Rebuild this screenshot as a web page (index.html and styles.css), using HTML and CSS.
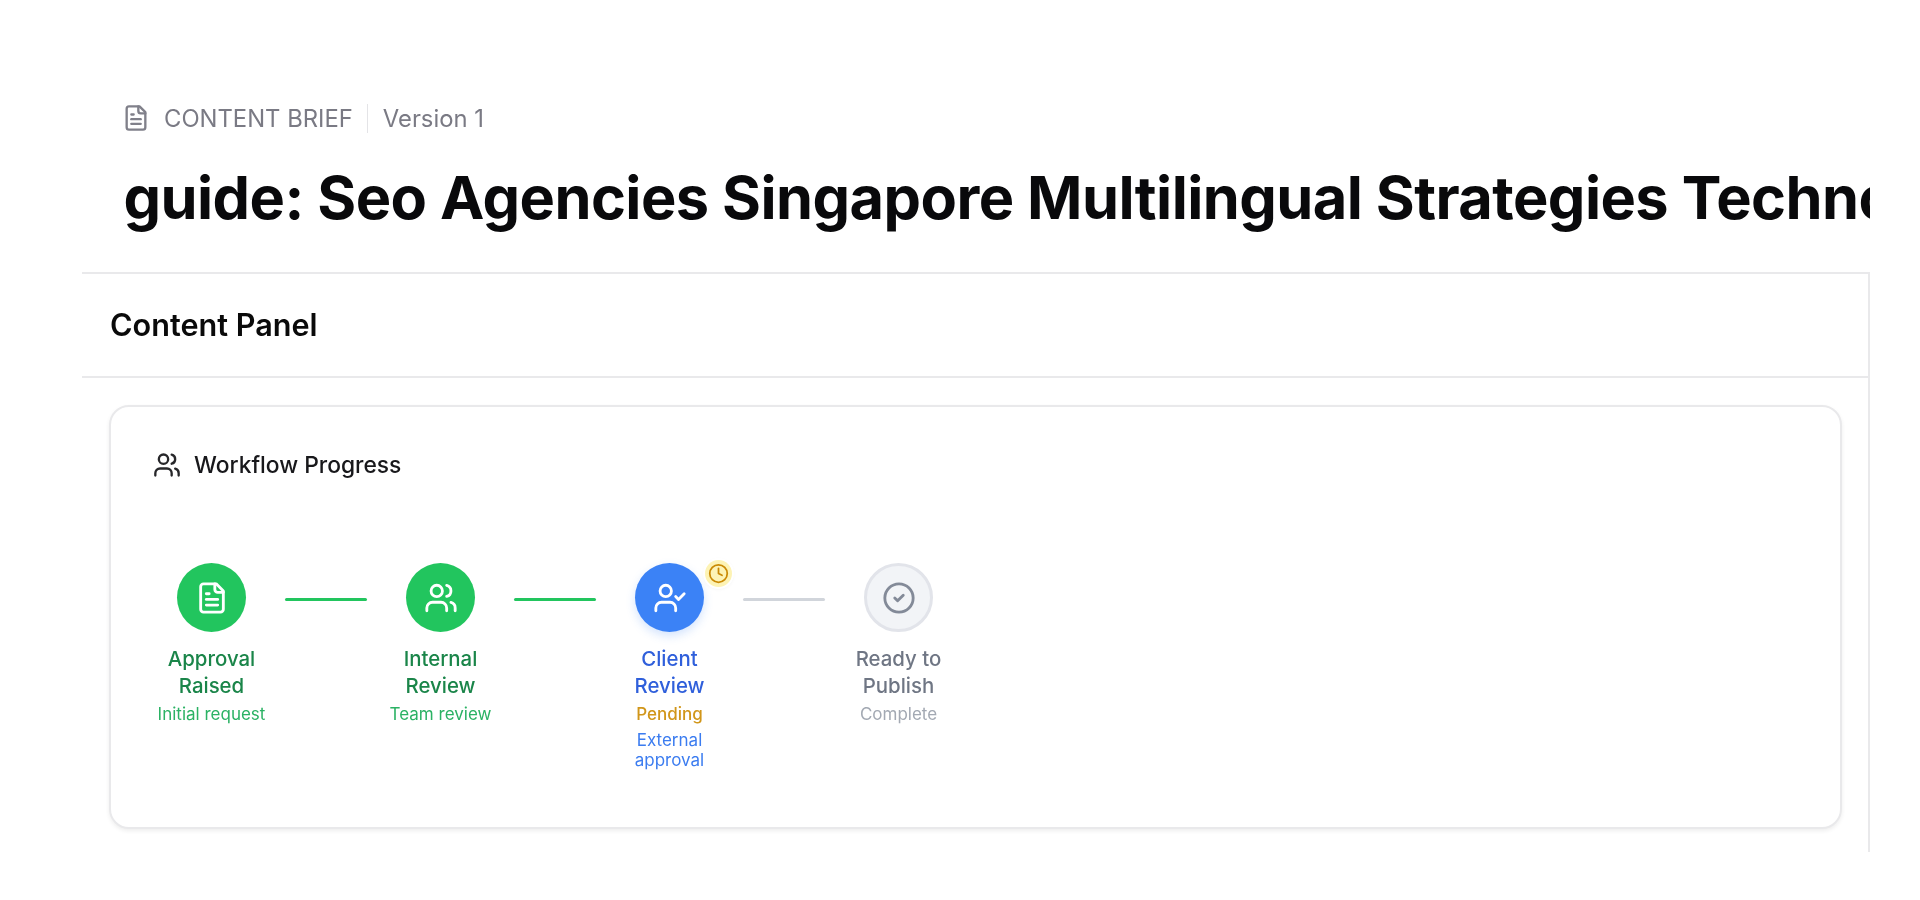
FILE: index.html
```html
<!DOCTYPE html>
<html lang="en">
<head>
<meta charset="utf-8">
<title>Content Brief</title>
<link rel="stylesheet" href="styles.css">
</head>
<body>
<svg class="defs" width="0" height="0" aria-hidden="true">
  <symbol id="i-file" viewBox="0 0 24 24"><path d="M15 2H6a2 2 0 0 0-2 2v16a2 2 0 0 0 2 2h12a2 2 0 0 0 2-2V7Z"/><path d="M14 2v4a2 2 0 0 0 2 2h4"/><path d="M10 9H8"/><path d="M16 13H8"/><path d="M16 17H8"/></symbol>
  <symbol id="i-users" viewBox="0 0 24 24"><path d="M16 21v-2a4 4 0 0 0-4-4H6a4 4 0 0 0-4 4v2"/><circle cx="9" cy="7" r="4"/><path d="M22 21v-2a4 4 0 0 0-3-3.87"/><path d="M16 3.13a4 4 0 0 1 0 7.75"/></symbol>
  <symbol id="i-user-check" viewBox="0 0 24 24"><path d="M16 21v-2a4 4 0 0 0-4-4H6a4 4 0 0 0-4 4v2"/><circle cx="9" cy="7" r="4"/><polyline points="16 11 18 13 22 9"/></symbol>
  <symbol id="i-circle-check" viewBox="0 0 24 24"><circle cx="12" cy="12" r="10"/><path d="m9 12 2 2 4-4"/></symbol>
  <symbol id="i-clock" viewBox="0 0 24 24"><circle cx="12" cy="12" r="10"/><polyline points="12 6 12 12 16 14"/></symbol>
</svg>
<main class="page">
  <header class="head">
    <div class="meta">
      <svg class="icon meta-icon"><use href="#i-file"/></svg>
      <span class="meta-kind">CONTENT BRIEF</span>
      <span class="meta-version">Version 1</span>
    </div>
    <h1 class="title">guide: Seo Agencies Singapore Multilingual Strategies Technology Trends and Best Practices</h1>
  </header>
  <section class="panel">
    <div class="panel-head"><h2 class="panel-title">Content Panel</h2></div>
    <div class="panel-body">
      <div class="card">
        <div class="card-head">
          <svg class="icon card-icon"><use href="#i-users"/></svg>
          <h3 class="card-title">Workflow Progress</h3>
        </div>
        <div class="flow">
          <div class="step done">
            <div class="dot"><svg class="icon"><use href="#i-file"/></svg></div>
            <div class="label">Approval Raised</div>
            <div class="sub">Initial request</div>
          </div>
          <div class="link on"></div>
          <div class="step done">
            <div class="dot"><svg class="icon"><use href="#i-users"/></svg></div>
            <div class="label">Internal Review</div>
            <div class="sub">Team review</div>
          </div>
          <div class="link on"></div>
          <div class="step active">
            <div class="dot">
              <svg class="icon"><use href="#i-user-check"/></svg>
              <span class="badge"><svg class="icon"><use href="#i-clock"/></svg></span>
            </div>
            <div class="label">Client Review</div>
            <div class="status">Pending</div>
            <div class="sub">External approval</div>
          </div>
          <div class="link"></div>
          <div class="step idle">
            <div class="dot"><svg class="icon"><use href="#i-circle-check"/></svg></div>
            <div class="label">Ready to Publish</div>
            <div class="sub">Complete</div>
          </div>
        </div>
      </div>
    </div>
  </section>
</main>
</body>
</html>
```

FILE: styles.css
```css
* { box-sizing: border-box; }
html, body { margin: 0; height: 100%; background: #fff; overflow: hidden; }
body { font-family: Inter, "Liberation Sans", sans-serif; color: #0a0a0a; }
.defs { position: absolute; }
.icon { fill: none; stroke: currentColor; stroke-width: 2; stroke-linecap: round; stroke-linejoin: round; display: block; }

.page { width: 1870px; padding: 102px 0 0 82px; filter: blur(0.4px); }
.head { padding: 0 0 0 41.5px; height: 170px; overflow: hidden; }
.meta { display: flex; align-items: center; height: 32px; color: #7a7a84; font-size: 23.8px; }
.meta-icon { width: 28px; height: 28px; margin: 0 14px 0 -1.5px; flex: none; color: #80808a; }
.meta-kind { padding-right: 14.5px; border-right: 1px solid #e4e4e7; line-height: 29px; }
.meta-version { padding-left: 14.5px; }
.title { margin: 26px 0 0; font-size: 59.5px; line-height: 74px; font-weight: 700; letter-spacing: -0.56px; white-space: nowrap; color: #09090b; }

.panel { height: 580px; border-top: 2px solid #e9e9eb; border-right: 2px solid #e9e9eb; }
.panel-head { height: 104px; padding: 0 28px 2px; display: flex; align-items: center; border-bottom: 2px solid #e9e9eb; }
.panel-title { margin: 0; font-size: 30.6px; font-weight: 600; color: #0a0a0a; }
.panel-body { padding: 27px 26px 0 27px; }
.card { height: 424px; border: 2px solid #e9e9eb; border-radius: 20px; background: #fff; padding: 42px 42px 0 39.5px; box-shadow: 0 2px 4px rgba(0,0,0,.07); }
.card-head { display: flex; align-items: center; height: 31px; gap: 13.5px; padding-left: 2px; }
.card-icon { width: 28px; height: 28px; color: #27272a; flex: none; }
.card-title { margin: 0; font-size: 22.8px; font-weight: 500; color: #18181b; }

.flow { display: flex; align-items: flex-start; margin-top: 83px; }
.step { width: 122px; flex: none; display: flex; flex-direction: column; align-items: center; text-align: center; }
.dot { position: relative; width: 69px; height: 69px; border-radius: 50%; display: flex; align-items: center; justify-content: center; margin-bottom: 13px; color: #fff; }
.dot > .icon { width: 34px; height: 34px; }
.link { flex: none; width: 82px; height: 3px; margin: 35px 12.5px 0; background: #d1d5db; border-radius: 2px; }
.link.on { background: #22c55e; }
.label { font-size: 20.4px; line-height: 27px; font-weight: 500; }
.sub { font-size: 17px; line-height: 20.5px; margin-top: 5px; }
.status { font-size: 17px; line-height: 20.5px; font-weight: 500; color: #d1961a; margin-top: 5px; }
.status + .sub { margin-top: 5px; }

.done .dot { background: #22c55e; }
.done .label { color: #1a8549; }
.done .sub { color: #2bb264; }
.active .dot { background: #3b82f6; box-shadow: 0 4px 10px rgba(59,130,246,.22); }
.active .label { color: #2f5fdb; }
.active .sub { color: #3b7cf0; }
.idle .dot { background: #f2f4f7; border: 3px solid #e2e4ea; color: #838a98; }
.idle .label { color: #6f7684; }
.idle .sub { color: #a3a9b3; }

.badge { position: absolute; top: -3px; right: -28px; width: 27px; height: 27px; border-radius: 50%; background: #fdf3b5; color: #ca8a04; display: flex; align-items: center; justify-content: center; box-shadow: 0 0 0 2px #fff, 0 1px 4px rgba(0,0,0,.1); }
.badge .icon { width: 21px; height: 21px; }
```
